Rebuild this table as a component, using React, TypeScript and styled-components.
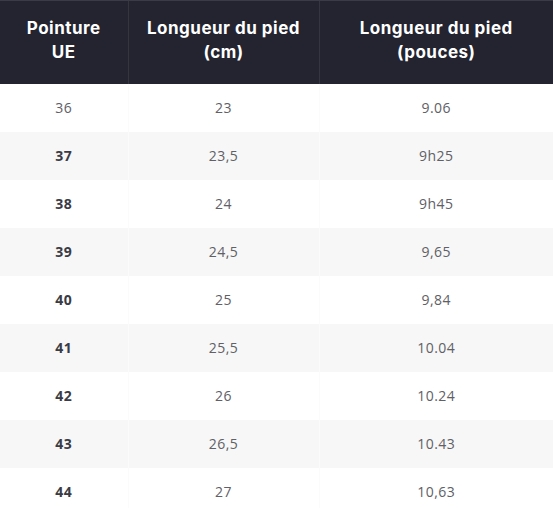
import styled, { createGlobalStyle } from "styled-components";

const GlobalStyle = createGlobalStyle`
  html, body {
    margin: 0;
    padding: 0;
    background: #ffffff;
  }
`;

const Table = styled.table`
  width: 553px;
  border-collapse: collapse;
  table-layout: fixed;
  font-family: "Open Sans", "Liberation Sans", sans-serif;
`;

const HeadCell = styled.th<{ $w: number }>`
  width: ${(p) => p.$w}px;
  height: 83px;
  padding: 0 8px 5px;
  box-sizing: border-box;
  background: #23242f;
  border-left: 1px solid #34353f;
  border-top: 1px solid #3a3b46;
  color: #ffffff;
  font-family: "Inter", "Open Sans", sans-serif;
  font-size: 17px;
  font-weight: 700;
  letter-spacing: 0.5px;
  line-height: 24px;
  text-align: center;
  vertical-align: middle;

  &:first-child {
    border-left: none;
  }
`;

const Row = styled.tr<{ $shade: boolean }>`
  height: 48px;
  background: ${(p) => (p.$shade ? "#f7f7f7" : "#ffffff")};
`;

const Cell = styled.td<{ $bold?: boolean }>`
  padding: 0;
  text-align: center;
  vertical-align: middle;
  border-left: 1px solid #fbfbfb;
  font-size: 14px;
  letter-spacing: 0.5px;
  color: ${(p) => (p.$bold ? "#3a3b44" : "#606066")};
  font-weight: ${(p) => (p.$bold ? 700 : 400)};

  &:first-child {
    border-left: none;
  }
`;

const rows: [string, string, string][] = [
  ["36", "23", "9.06"],
  ["37", "23,5", "9h25"],
  ["38", "24", "9h45"],
  ["39", "24,5", "9,65"],
  ["40", "25", "9,84"],
  ["41", "25,5", "10.04"],
  ["42", "26", "10.24"],
  ["43", "26,5", "10.43"],
  ["44", "27", "10,63"],
];

export default function App() {
  return (
    <>
      <GlobalStyle />
      <Table>
        <thead>
          <tr>
            <HeadCell $w={128}>
              Pointure
              <br />
              UE
            </HeadCell>
            <HeadCell $w={191}>
              Longueur du pied
              <br />
              (cm)
            </HeadCell>
            <HeadCell $w={234}>
              Longueur du pied
              <br />
              (pouces)
            </HeadCell>
          </tr>
        </thead>
        <tbody>
          {rows.map(([eu, cm, inch], i) => (
            <Row key={eu} $shade={i % 2 === 1}>
              <Cell $bold={i > 0}>{eu}</Cell>
              <Cell>{cm}</Cell>
              <Cell>{inch}</Cell>
            </Row>
          ))}
        </tbody>
      </Table>
    </>
  );
}
